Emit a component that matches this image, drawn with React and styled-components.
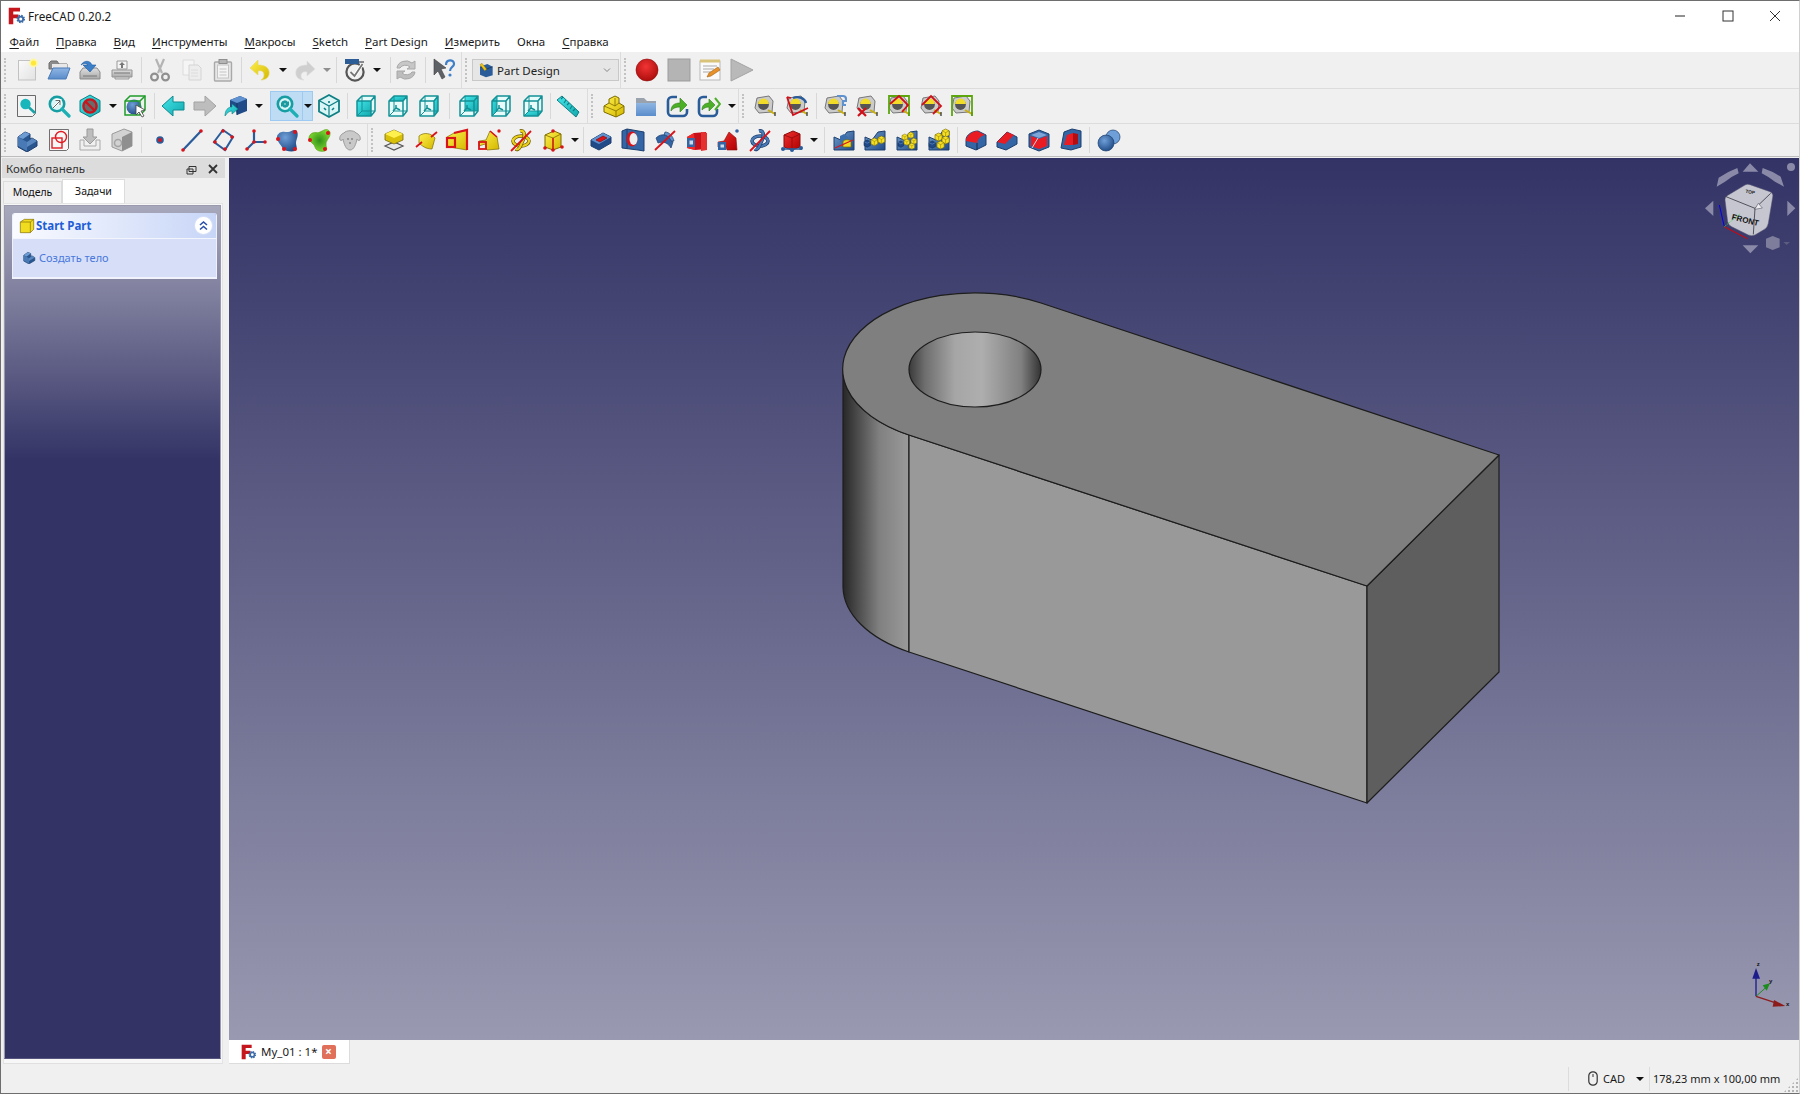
import React from 'react'
import styled, { createGlobalStyle } from 'styled-components'

const GlobalStyle = createGlobalStyle`
  html, body { margin: 0; padding: 0; background: #f0f0f0; }
  body { font-family: "Noto Sans", "Open Sans", sans-serif; font-size: 11.5px; color: #1a1a1a; }
`

/* ---------- icon helpers, everything is drawn on a 24x24 grid ---------- */

const Icon = styled.svg`
  width: ${p => p.$s || 24}px;
  height: ${p => p.$s || 24}px;
  display: block;
  flex: none;
`

const Svg = ({ s, children }) => <Icon $s={s} viewBox="0 0 24 24">{children}</Icon>

const Gradients = () => (
  <svg width="0" height="0" style={{ position: 'absolute' }}>
    <defs>
      <linearGradient id="blue" x1="0" y1="0" x2="1" y2="1"><stop offset="0" stopColor="#729fcf" /><stop offset="1" stopColor="#204a87" /></linearGradient>
      <linearGradient id="folder" x1="0" y1="0" x2="0" y2="1"><stop offset="0" stopColor="#8fb6e3" /><stop offset="1" stopColor="#5a8ccb" /></linearGradient>
      <linearGradient id="yellow" x1="0" y1="0" x2="1" y2="1"><stop offset="0" stopColor="#fff04d" /><stop offset="1" stopColor="#d4b800" /></linearGradient>
      <linearGradient id="teal" x1="0" y1="0" x2="1" y2="1"><stop offset="0" stopColor="#43e6ea" /><stop offset="1" stopColor="#12a8ad" /></linearGradient>
      <linearGradient id="red" x1="0" y1="0" x2="1" y2="1"><stop offset="0" stopColor="#f03030" /><stop offset="1" stopColor="#b00000" /></linearGradient>
      <linearGradient id="gray" x1="0" y1="0" x2="0" y2="1"><stop offset="0" stopColor="#dedede" /><stop offset="1" stopColor="#a9a9a9" /></linearGradient>
      <linearGradient id="paper" x1="0" y1="0" x2="1" y2="1"><stop offset="0" stopColor="#fbfbfb" /><stop offset="1" stopColor="#e2e2e2" /></linearGradient>
      <radialGradient id="ball" cx="0.4" cy="0.35" r="0.7"><stop offset="0" stopColor="#6f9fd8" /><stop offset="1" stopColor="#1f4a85" /></radialGradient>
      <radialGradient id="rec" cx="0.45" cy="0.35" r="0.7"><stop offset="0" stopColor="#f23434" /><stop offset="1" stopColor="#a80a0a" /></radialGradient>
      <radialGradient id="leaf" cx="0.5" cy="0.5" r="0.6"><stop offset="0" stopColor="#2f8f1a" /><stop offset="1" stopColor="#8ae234" /></radialGradient>
      <linearGradient id="cyl" x1="0" y1="0" x2="1" y2="0"><stop offset="0" stopColor="#272727" /><stop offset="0.55" stopColor="#808080" /><stop offset="1" stopColor="#9a9a9a" /></linearGradient>
      <linearGradient id="bore" x1="0" y1="0" x2="1" y2="0"><stop offset="0" stopColor="#3a3a3a" /><stop offset="0.12" stopColor="#6e6e6e" /><stop offset="0.35" stopColor="#a6a6a6" /><stop offset="0.55" stopColor="#aeaeae" /><stop offset="0.85" stopColor="#808080" /><stop offset="1" stopColor="#333" /></linearGradient>
    </defs>
  </svg>
)

const Dot = ({ x, y, r = 1.8 }) => <circle cx={x} cy={y} r={r} fill="#d8141a" />

const Mag = ({ children }) => (
  <>
    <circle cx="10" cy="10" r="7.2" fill="#d9f5f6" stroke="#179ea3" strokeWidth="2.6" />
    <path d="M15 15l7 7" stroke="#1cb0b5" strokeWidth="3.2" strokeLinecap="round" />
    {children}
  </>
)

const faces = {
  front: '3,7 17,7 17,22 3,22',
  top: '3,7 8,2 21,2 17,7',
  right: '17,7 21,2 21,17 17,22',
  rear: '8,2 21,2 21,17 8,17',
  left: '3,7 8,2 8,17 3,22',
  bottom: '3,22 8,17 21,17 17,22'
}

const ViewCube = ({ fill, mark }) => (
  <Svg>
    <polygon points="3,7 8,2 21,2 21,17 17,22 3,22" fill="#e8fbfb" />
    {fill.map(f => <polygon key={f} points={faces[f]} fill="url(#teal)" />)}
    <path d="M8 2v15h13M8 17l-5 5" fill="none" stroke="#129196" strokeWidth="1" />
    <path d="M3 7l5-5h13v15l-4 5H3zM3 7h14v15M17 7l4-5" fill="none" stroke="#129196" strokeWidth="1.500" strokeLinejoin="round" />
    {mark && <path d="M10 11v3l-3 3M10 14l4 2" fill="none" stroke="#129196" strokeWidth="1.500" />}
  </Svg>
)

const Tape = ({ children }) => (
  <Svg>
    <path d="M4 4l12-2 4 5-1 11-13 1-4-5z" fill="#cbcbcb" stroke="#777" />
    <circle cx="10.500" cy="10.500" r="5.400" fill="#555" />
    <path d="M5.100 10a5.400 5.400 0 0 1 10.800 0z" fill="#f2dc2a" />
    <path d="M15 16l7 4" stroke="#c9ae10" strokeWidth="2" />
    <path d="M22 18v4" stroke="#444" strokeWidth="1.400" />
    {children}
  </Svg>
)

const Block = ({ s, c1, c2, c3, stroke, children }) => (
  <Svg s={s}>
    <path d="M3 9l7-5 5 2v5l2-1 5 3v5l-10 6-9-5z" fill={c2} stroke={stroke} strokeWidth="1" strokeLinejoin="round" />
    <path d="M3 9l9 5v9l-9-5z" fill={c1} />
    <path d="M3 9l7-5 5 2-7 5z" fill={c3} />
    <path d="M12 14l3-2 2-2 5 3-10 6z" fill={c3} opacity=".7" />
    {children}
  </Svg>
)

const Box = ({ base, face, side, stroke = '#1d3f6e', children }) => (
  <Svg>
    <path d="M2 12l12-7 8 4v6l-12 7-8-4z" fill={base} stroke={stroke} strokeLinejoin="round" />
    <path d="M2 12l12-7 8 4-12 7z" fill={side} />
    <path d="M7 12l7-4 4 2-7 4z" fill={face} stroke="#7d0000" strokeWidth=".6" />
    {children}
  </Svg>
)

const Cube = ({ fill, edge, children }) => (
  <Svg>
    <path d="M4 7l9-4 7 3v13l-8 3-8-3z" fill={fill} stroke={edge} strokeLinejoin="round" />
    <path d="M4 7l8 3 8-4M12 10v12" fill="none" stroke={edge} strokeWidth=".8" />
    {children}
  </Svg>
)

const Ground = ({ children }) => (
  <Svg>
    <path d="M2 22V9l7 3 6-8 7-1v19z" fill="url(#blue)" stroke="#1d3f6e" strokeLinejoin="round" />
    {children}
  </Svg>
)

const YCube = ({ x, y, s = 1 }) => (
  <g transform={`translate(${x} ${y}) scale(${s})`}>
    <path d="M0 2l4-2 4 2v5l-4 2-4-2z" fill="#f5e024" stroke="#7d6b00" strokeWidth=".7" />
    <path d="M0 2l4 2 4-2M4 4v5" fill="none" stroke="#7d6b00" strokeWidth=".5" />
  </g>
)

const BCube = ({ x, y, s = 1 }) => (
  <g transform={`translate(${x} ${y}) scale(${s})`}>
    <path d="M0 2l4-2 4 2v5l-4 2-4-2z" fill="#204a87" stroke="#0f2b52" strokeWidth=".7" />
    <path d="M0 2l4 2 4-2" fill="none" stroke="#7ea6d8" strokeWidth=".6" />
  </g>
)

const Logo = ({ s = 20 }) => (
  <Svg s={s}>
    <path d="M1 1h15v5H7v4h7v5H7v8H1z" fill="#c4161c" />
    <circle cx="17" cy="16" r="4.4" fill="#3c6ca8" stroke="#3c6ca8" strokeWidth="2.6" strokeDasharray="2 1.45" />
    <circle cx="17" cy="16" r="2" fill="#fff" />
  </Svg>
)

const Cursor = () => <path d="M13 11l9 5-4 1 3 5-2 1-3-5-3 3z" fill="#fff" stroke="#444" strokeWidth=".8" />

const icons = {
  new: <Svg><rect x="3.5" y="2.5" width="17" height="19.5" fill="url(#paper)" stroke="#c2c2c2" /><circle cx="18.5" cy="5" r="4.4" fill="#fff7a0" /><circle cx="18.5" cy="5" r="2.6" fill="#ffe83a" /></Svg>,
  open: <Svg><path d="M2 5l2-2h6l2 3h8v5H2z" fill="#8b8b8b" stroke="#6f6f6f" /><path d="M5 6h15v4H5z" fill="#e8e8e8" /><path d="M6 10h17l-4 11H1z" fill="url(#folder)" stroke="#4a7bb8" strokeLinejoin="round" /></Svg>,
  save: <Svg><path d="M2 14l3-4h14l3 4v7H2z" fill="url(#gray)" stroke="#8a8a8a" strokeLinejoin="round" /><path d="M5 18h14" stroke="#777" /><path d="M3 7c3-5 9-5 11 0h4l-6 7-7-7h5c-2-2-4-2-7 0z" fill="#3b7fc8" stroke="#1f5a9e" strokeWidth=".6" /></Svg>,
  print: <Svg><path d="M7 3h10v8H7z" fill="#f4f4f4" stroke="#9a9a9a" /><path d="M12 4l3 3h-2v3h-2V7H9z" fill="#777" /><path d="M2 12h20v7H2z" fill="url(#gray)" stroke="#949494" /><path d="M4 15h16" stroke="#777" /><path d="M5 19h14v2H5z" fill="#ddd" stroke="#999" /></Svg>,
  cut: <Svg><path d="M8 1l6 14M16 1l-6 14" stroke="#b4b4b4" strokeWidth="2.2" /><circle cx="6.5" cy="19" r="3.4" fill="none" stroke="#8f8f8f" strokeWidth="2.2" /><circle cx="17.5" cy="19" r="3.4" fill="none" stroke="#8f8f8f" strokeWidth="2.2" /></Svg>,
  copy: <Svg><path d="M3 2h11v15H3z" fill="#f5f5f5" stroke="#dcdcdc" /><path d="M9 7h9l3 3v12H9z" fill="#ededed" stroke="#d4d4d4" /><path d="M11 12h7M11 15h7M11 18h7" stroke="#dcdcdc" /></Svg>,
  paste: <Svg><rect x="3.5" y="4" width="17" height="19" rx="1" fill="#e6e6e6" stroke="#a9a9a9" strokeWidth="1.4" /><rect x="6.5" y="7" width="11" height="13" fill="#f4f4f4" stroke="#c4c4c4" /><rect x="8" y="1.5" width="8" height="4" fill="#b5b5b5" stroke="#8f8f8f" /><path d="M8.500 11h7M8.500 14h7M8.500 17h7" stroke="#c4c4c4" /></Svg>,
  undo: <Svg><path d="M10 2L2 10l8 7v-4c4-1 6 1 6 4 0 2-1 4-3 5 6 0 9-4 8-9-1-4-5-6-11-6z" fill="url(#yellow)" stroke="#e4d66a" strokeWidth=".6" /></Svg>,
  redo: <Svg><path d="M14 3l8 8-8 7v-4c-4-1-6 1-6 4 0 2 1 3 3 4-6 0-9-4-8-9 1-4 5-6 11-6z" fill="#cfcfcf" stroke="#dedede" strokeWidth=".6" /></Svg>,
  check: <Svg><circle cx="12" cy="14" r="8.6" fill="#f0f0f0" stroke="#555" strokeWidth="2.2" /><path d="M7.500 14l4 4 8-12" fill="none" stroke="#fff" strokeWidth="3.6" /><path d="M7.500 14l4 4 8-12" fill="none" stroke="#777" strokeWidth="1.8" /><rect x="2" y="1" width="14" height="5" fill="#2b5c96" /><rect x="16" y="3" width="5" height="2" fill="#8a8a8a" /></Svg>,
  refresh: <Svg><path d="M3 10a9 8 0 0 1 15-5l3-2v8h-8l3-2a6 5 0 0 0-10 1z" fill="#c7c7c7" stroke="#a8a8a8" /><path d="M21 14a9 8 0 0 1-15 5l-3 2v-8h8l-3 2a6 5 0 0 0 10-1z" fill="#bdbdbd" stroke="#a8a8a8" /></Svg>,
  help: <Svg><path d="M2 1l12 9-5 1 4 8-3 2-4-8-4 4z" fill="#5e6166" stroke="#3d3d3d" strokeWidth=".6" /><path d="M14 7c0-6 8-6 8-1 0 3-4 3-4 7" fill="none" stroke="#3f7fc8" strokeWidth="2.2" /><circle cx="18" cy="17" r="1.6" fill="#3f7fc8" /></Svg>,
  record: <Svg><circle cx="12" cy="12" r="11" fill="url(#rec)" stroke="#8c0c0c" strokeWidth=".6" /></Svg>,
  stop: <Svg><rect x="1" y="1" width="22" height="22" fill="#b4b4b4" stroke="#9b9b9b" /></Svg>,
  notes: <Svg><rect x="2" y="3" width="20" height="19" fill="#fafafa" stroke="#b8b8b8" /><rect x="2" y="1.500" width="20" height="3" fill="#d9c27a" /><path d="M5 8h14M5 11h11M5 14h8" stroke="#a9a9a9" /><path d="M9 19l2-4 9-6 2 3-9 6z" fill="#e8902a" stroke="#a35f10" strokeWidth=".6" /></Svg>,
  play: <Svg><path d="M1 1l22 11L1 23z" fill="#b9b9b9" stroke="#a4a4a4" /></Svg>,

  fitall: <Svg><path d="M2.500 1.500h18v18l-3 3h-15z" fill="#f3f3f3" stroke="#6a6a6a" /><circle cx="10.500" cy="10" r="5.200" fill="#19b6bc" /><path d="M14 13.500l6 5.500" stroke="#17a3a8" strokeWidth="2.600" /></Svg>,
  fitsel: <Svg><Mag><path d="M6 14l7-7M8 6h5.500v5" fill="none" stroke="#fff" strokeWidth="2" /><path d="M6 14l7-7M8.500 6.500h4.500v4.500" fill="none" stroke="#444" strokeWidth=".8" /></Mag></Svg>,
  draw: <Svg><path d="M12 1l10 5.500v11L12 23 2 17.500v-11z" fill="url(#teal)" stroke="#0e7f84" /><circle cx="12" cy="12" r="6.600" fill="#6a6a6a" stroke="#c9161c" strokeWidth="2.400" /><path d="M7.500 7.500l9 9" stroke="#c9161c" strokeWidth="2.400" /></Svg>,
  bbox: <Svg><circle cx="11" cy="13" r="7.500" fill="url(#ball)" /><path d="M2 7l5-5h15v14l-5 5H2z" fill="none" stroke="#1f9c2a" strokeWidth="1.500" /><path d="M2 7h15v14M17 7l5-5" fill="none" stroke="#1f9c2a" strokeWidth="1.500" /><Cursor /></Svg>,
  back: <Svg><path d="M1 12L12 2v6h11v8H12v6z" fill="url(#teal)" stroke="#0e8a8f" strokeLinejoin="round" /></Svg>,
  fwd: <Svg><path d="M23 12L12 2v6H1v8h11v6z" fill="#bdbdbd" stroke="#a3a3a3" strokeLinejoin="round" /></Svg>,
  sync: <Svg><path d="M6 6l10-4 7 3v12l-10 4-1-5-6-3z" fill="#1f4c89" /><path d="M6 6l7 3 10-4-7-3z" fill="#5f92cf" /><path d="M13 9v12" stroke="#153761" /><path d="M1 22c0-6 3-9 7-9v-3l6 5-6 5v-3c-3 0-5 2-7 5z" fill="url(#teal)" stroke="#0e7f84" strokeWidth=".6" /></Svg>,
  zoomsync: <Svg><Mag><path d="M6 9a4 4 0 0 1 7-1l1-1v4h-4l1-1a2.500 2.500 0 0 0-4 0zM14 11a4 4 0 0 1-7 1l-1 1V9h4l-1 1a2.500 2.500 0 0 0 4 0z" fill="#1b9aa0" /></Mag></Svg>,
  iso: <Svg><path d="M12 1l10 5.500v11L12 23 2 17.500v-11z" fill="#d9f5f6" stroke="#0e7f84" strokeWidth="1.800" strokeLinejoin="round" /><path d="M2 6.500L12 12l10-5.500M12 12v11" fill="none" stroke="#0e7f84" strokeWidth="1.200" /><path d="M7 14l2 2M17 14l-2 2M12 7v2" stroke="#0e7f84" strokeWidth="1.600" /></Svg>,
  ruler: <Svg><path d="M1 6l5-4 17 16-3 5z" fill="url(#teal)" stroke="#0e7f84" strokeLinejoin="round" /><path d="M7 3l-2 2M10 6L8 9M13 9l-2 2M16 12l-2 3M19 15l-2 2" stroke="#0e7f84" strokeWidth="1.100" /></Svg>,

  part: <Svg><path d="M2 12l5-3V5l6-3 4 2v5l5 3v7l-8 4-12-5z" fill="url(#yellow)" stroke="#7d6b00" strokeLinejoin="round" /><path d="M2 12l12 5 8-5M14 17v6M7 9l6 3 4-3M13 4v8" fill="none" stroke="#7d6b00" strokeWidth=".8" /></Svg>,
  group: <Svg><path d="M2 4h8l3 3h9v15H2z" fill="#9aa3ad" /><path d="M2 9h20v13H2z" fill="url(#folder)" /></Svg>,
  link: <Svg><path d="M12 3H7a4 4 0 0 0-4 4v11a4 4 0 0 0 4 4h11a4 4 0 0 0 4-4v-3" fill="none" stroke="#2a5c9a" strokeWidth="2.600" /><path d="M6 17c0-6 4-8 9-8V4l7 7-7 7v-5c-4 0-7 1-9 4z" fill="#4caf28" stroke="#2e7d18" strokeWidth=".6" /></Svg>,
  linkmore: <Svg><path d="M10 3H6a4 4 0 0 0-4 4v11a4 4 0 0 0 4 4h10a4 4 0 0 0 4-4v-3" fill="none" stroke="#2a5c9a" strokeWidth="2.600" /><path d="M5 16c0-5 3-7 7-7V5l6 6-6 6v-4c-3 0-5 1-7 3z" fill="#4caf28" stroke="#2e7d18" strokeWidth=".6" /><path d="M18 4l5 6-5 6" fill="none" stroke="#4caf28" strokeWidth="2" /></Svg>,
  t1: <Tape />,
  t2: <Tape><path d="M2 3l6 18L23 14M2 3l4 1" fill="none" stroke="#d01018" strokeWidth="1.800" /><path d="M8 4a9 7 0 0 1 13 5" fill="none" stroke="#2a5c9a" strokeWidth="2.400" /></Tape>,
  t3: <Tape><path d="M14 2h6a3 3 0 0 1 3 3v2h-3v4h3" fill="none" stroke="#5f92cf" strokeWidth="2.200" /></Tape>,
  t4: <Tape><path d="M3 14l8 8M11 14l-8 8" stroke="#d01018" strokeWidth="2.200" /></Tape>,
  t5: <Tape><path d="M2 20V2h20v20" fill="none" stroke="#5da60d" strokeWidth="1.800" /><path d="M3 10l9-8 9 9-6 7" fill="none" stroke="#d01018" strokeWidth="1.800" /></Tape>,
  t6: <Tape><path d="M3 11l9-9 10 10-8 8" fill="none" stroke="#d01018" strokeWidth="1.800" /></Tape>,
  t7: <Tape><path d="M2 22V2h20v20" fill="none" stroke="#5da60d" strokeWidth="1.800" /></Tape>,

  body: <Block c1="#4a7ab5" c2="#2a568f" c3="#6f9dd3" stroke="#1d3f6e" />,
  sketch: <Svg><path d="M2.500 1.500h19v19l-2 2h-17z" fill="#f6f6f6" stroke="#707070" /><rect x="5" y="10" width="10" height="10" fill="none" stroke="#e01a20" strokeWidth="1.400" /><circle cx="14" cy="9" r="5.500" fill="none" stroke="#e01a20" strokeWidth="1.400" /></Svg>,
  import: <Svg><path d="M9 1h6v8h4l-7 7-7-7h4z" fill="#bdbdbd" stroke="#9a9a9a" /><path d="M2 12v10h20V12h-4v6H6v-6z" fill="#efefef" stroke="#a9a9a9" /></Svg>,
  clone: <Svg><path d="M2 6l12-5 8 3v14l-10 5-10-4z" fill="#d2d2d2" stroke="#9a9a9a" /><path d="M12 9l10-5v14l-10 5z" fill="#8f8f8f" /><circle cx="8" cy="15" r="3.500" fill="none" stroke="#a4a4a4" strokeWidth="1.500" /></Svg>,
  point: <Svg><circle cx="12" cy="12" r="3.800" fill="#2a5c9a" /><circle cx="12" cy="12" r="1.900" fill="#d8141a" /></Svg>,
  line: <Svg><path d="M3 22L21 3" stroke="#2a5c9a" strokeWidth="2.200" /><Dot x={3} y={22} /><Dot x={21} y={3} /></Svg>,
  plane: <Svg><path d="M12 2l10 7-8 13-11-8z" fill="none" stroke="#2a5c9a" strokeWidth="2" /><Dot x={12} y={3} /><Dot x={21} y={9} /><Dot x={14} y={21} /><Dot x={4} y={14} /></Svg>,
  lcs: <Svg><path d="M11 14V3M11 14l-7 7M11 14h11" stroke="#2a5c9a" strokeWidth="2.200" /><Dot x={11} y={3} /><Dot x={11} y={14} /><Dot x={22} y={14} /><Dot x={4} y={21} /></Svg>,
  binder: <Svg><path d="M2 8C5 2 10 4 13 4C16 4 19 0 22 3C24 8 21 11 21 15C21 18 23 20 20 23C16 24 10 23 8 21C6 16 2 15 2 8Z" fill="url(#ball)" /><Dot x={3} y={11} r={2} /><Dot x={20} y={4} r={2} /><Dot x={20} y={21} r={2} /><Dot x={9} y={21} r={2} /></Svg>,
  subshape: <Svg><path d="M2 9C5 2 10 6 13 4C16 3 20 -1 23 4C24 9 19 12 19 16C19 20 21 21 18 23C14 24 9 23 8 19C7 15 2 15 2 9Z" fill="url(#leaf)" stroke="#4e9a06" strokeWidth=".6" /><Dot x={3} y={12} r={2} /><Dot x={21} y={5} r={2} /><Dot x={18} y={21} r={2} /></Svg>,
  sheep: <Svg><path d="M6 5c2-3 10-3 12 0 3 1 5 4 4 7-1 1-3 0-3-1-1 5-3 11-7 11S6 16 5 11c0 1-2 2-3 1-1-3 1-6 4-7z" fill="#c9c9c9" stroke="#9c9c9c" /><path d="M9 11h2M13 11h2M11 15h2" stroke="#666" strokeWidth="1.200" /></Svg>,

  pad: <Svg><path d="M3 18l9 4 9-4-9-4z" fill="#e9e9e9" stroke="#555" strokeWidth="1.200" /><path d="M3 6l9-4 9 4v6l-9 4-9-4z" fill="#d9c10a" stroke="#6a5a00" strokeWidth=".7" /><path d="M3 6l9 4 9-4-9-4z" fill="#fff04d" /></Svg>,
  revolve: <Svg><path d="M5 8c5-4 12-3 16 2l-3 11c-6 0-10-3-13-6z" fill="url(#yellow)" stroke="#7d6b00" strokeWidth=".7" /><path d="M2 19l6-5M17 9l6-5" stroke="#d8141a" strokeWidth="1.800" /></Svg>,
  loft: <Svg><path d="M9 5l13-3v20l-12-2-8-2V9z" fill="url(#yellow)" stroke="#7d6b00" strokeWidth=".7" /><path d="M9 5l13-3v20" fill="none" stroke="#d8141a" strokeWidth="2.200" /><rect x="2" y="10" width="8" height="9" fill="none" stroke="#d8141a" strokeWidth="2.200" /></Svg>,
  pipe: <Svg><path d="M2 13l7-1 4-9 7 6 2 12-12 1-2-6-6 2z" fill="url(#yellow)" stroke="#7d6b00" strokeWidth=".7" /><path d="M13 3l7 6" stroke="#d8141a" strokeWidth="1.600" /><rect x="2" y="14" width="7" height="7" fill="none" stroke="#d8141a" strokeWidth="1.800" /><circle cx="22" cy="3" r="1.700" fill="#d8141a" /></Svg>,
  helix: <Svg><ellipse cx="12" cy="13" rx="8" ry="5" fill="none" stroke="#6a5a00" strokeWidth="3.600" /><ellipse cx="12" cy="13" rx="8" ry="5" fill="none" stroke="#ecd11c" strokeWidth="2.200" /><path d="M11 3c4-1 5 3 4 7l-4 9c-1 2-3 3-4 2" fill="none" stroke="#6a5a00" strokeWidth="3.600" /><path d="M11 3c4-1 5 3 4 7l-4 9c-1 2-3 3-4 2" fill="none" stroke="#ecd11c" strokeWidth="2.200" /><path d="M2 23L22 3" stroke="#d8141a" strokeWidth="1.800" /></Svg>,
  prim: <Cube fill="url(#yellow)" edge="#7d6b00"><path d="M12 10v12" stroke="#d8141a" strokeWidth="1.400" /><Dot x={12} y={3} /><Dot x={4} y={20} /><Dot x={12} y={22} /><Dot x={21} y={19} /></Cube>,
  pocket: <Box base="#204a87" side="#5f92cf" face="#d8141a" />,
  hole: <Svg><path d="M1 3l5-2 17 3v19l-6-1-16-2z" fill="#3465a4" stroke="#1d3f6e" /><path d="M6 1v20" stroke="#1d3f6e" /><ellipse cx="11" cy="11" rx="5.400" ry="7.500" fill="#d8141a" /><ellipse cx="12.500" cy="11" rx="4" ry="6" fill="#eee" /></Svg>,
  groove: <Svg><path d="M3 10c6-6 13-3 17 4l-2 6c-3-5-7-7-13-5z" fill="#3465a4" stroke="#1d3f6e" strokeWidth=".7" /><path d="M12 4c4 0 8 4 9 9l-3 0c-1-3-4-6-7-6z" fill="#5f92cf" stroke="#1d3f6e" strokeWidth=".7" /><path d="M2 22L22 3" stroke="#d8141a" strokeWidth="1.800" /></Svg>,
  subloft: <Svg><path d="M9 5l12-1 1 17-12 1-8-2V9z" fill="#c8101a" /><path d="M9 5l-7 4v11l8 2" fill="#ef2929" /><rect x="2" y="10" width="8" height="9" fill="#3465a4" /><rect x="4.500" y="12.500" width="3.500" height="4" fill="#cdd9ea" /><path d="M16 4l6 1v17l-6 1z" fill="#e53030" /></Svg>,
  subpipe: <Svg><path d="M2 14l6-1 5-9 7 6 1 12H11l-2-6-7 3z" fill="url(#red)" stroke="#8c0c0c" strokeWidth=".6" /><rect x="2" y="14" width="8" height="8" fill="#3465a4" /><rect x="4.500" y="16.500" width="3.500" height="3" fill="#cdd9ea" /><circle cx="21" cy="3" r="1.800" fill="#3465a4" /></Svg>,
  subhelix: <Svg><ellipse cx="12" cy="13" rx="8" ry="5" fill="none" stroke="#1d3f6e" strokeWidth="3.600" /><ellipse cx="12" cy="13" rx="8" ry="5" fill="none" stroke="#4a7ab5" strokeWidth="2.200" /><path d="M11 3c4-1 5 3 4 7l-4 9c-1 2-3 3-4 2" fill="none" stroke="#1d3f6e" strokeWidth="3.600" /><path d="M11 3c4-1 5 3 4 7l-4 9c-1 2-3 3-4 2" fill="none" stroke="#4a7ab5" strokeWidth="2.200" /><path d="M2 23L22 3" stroke="#d8141a" strokeWidth="1.800" /></Svg>,
  subprim: <Svg><path d="M4 7l9-4 7 3v13l-8 3-8-3z" fill="url(#red)" stroke="#8c0c0c" strokeLinejoin="round" /><path d="M4 7l8 3 8-4M12 10v12" fill="none" stroke="#8c0c0c" strokeWidth=".8" /><path d="M2 21h20" stroke="#2a5c9a" strokeWidth="1.500" /><circle cx="3" cy="21" r="2" fill="#2a5c9a" /><circle cx="12" cy="22" r="2" fill="#2a5c9a" /><circle cx="21" cy="20" r="2" fill="#2a5c9a" /></Svg>,

  mirror: <Ground><path d="M8 8l4-2 4 3v3l-8 2z" fill="#3b6eaa" /><path d="M11 14c0-3 8-3 8 0v5H11z" fill="#f0d822" stroke="#7d6b00" strokeWidth=".7" /><path d="M3 20l18-8" stroke="#d8141a" strokeWidth="1.200" /></Ground>,
  linear: <Ground><BCube x={1} y={12} s={.8} /><YCube x={8} y={10} s={.85} /><YCube x={15} y={8} s={.85} /></Ground>,
  polar: <Ground><BCube x={3} y={13} s={.7} /><YCube x={7} y={6} s={.7} /><YCube x={13} y={4} s={.7} /><YCube x={16} y={10} s={.7} /><YCube x={9} y={11} s={.7} /><YCube x={14} y={15} s={.7} /></Ground>,
  multi: <Ground><BCube x={2} y={13} s={.8} /><YCube x={8} y={5} s={.9} /><YCube x={15} y={1} s={.9} /><YCube x={15} y={8} s={.9} /><YCube x={10} y={13} s={.9} /></Ground>,

  fillet: <Svg><path d="M2 12c0-5 6-9 12-9l8 4v10l-10 5-10-4z" fill="#3465a4" stroke="#1d3f6e" /><path d="M2 13c0-5 5-9 11-10l8 4c-5 1-7 4-8 8z" fill="#e81c22" /><path d="M13 15v7" stroke="#0f2b52" /></Svg>,
  chamfer: <Svg><path d="M2 14L12 4l10 5v7l-11 6-9-3z" fill="#3465a4" stroke="#1d3f6e" /><path d="M2 14L12 4l7 3-9 9z" fill="#e81c22" /></Svg>,
  draft: <Svg><path d="M12 2l10 4v13l-10 4-10-4V6z" fill="#3465a4" stroke="#1d3f6e" strokeLinejoin="round" /><path d="M4 8l8 3v10l-8-3zM20 8l-8 3v10l8-3z" fill="#e81c22" /><path d="M4 7l8-3 8 3-8 3z" fill="#7ea6d8" /><path d="M5 20l6-10" stroke="#cdd9ea" /></Svg>,
  thick: <Svg><path d="M5 4l8-3 9 2v16l-10 3-10-2z" fill="#3465a4" stroke="#1d3f6e" strokeLinejoin="round" /><path d="M8 7l6-2v12H5z" fill="#e81c22" /><path d="M14 5l5 1v10l-5 1z" fill="#b30d12" /></Svg>,
  boolean: <Svg><circle cx="16" cy="9" r="7" fill="#6f9fd8" stroke="#1d3f6e" strokeWidth=".7" /><circle cx="9" cy="15" r="8" fill="url(#ball)" stroke="#1d3f6e" strokeWidth=".7" /></Svg>
}

/* ---------- toolbars ---------- */

const row1 = [
  { width: 461, items: ['new', 'open', 'save', 'print', 's6', 'cut', 'copy', 'paste', 's5', 'undo', 'a', 'redo', 'g', 's5', 'check', 'a', 'd6', 's1', 'refresh', 's6', 'help'] },
  { width: 159, combo: true },
  { items: ['record', 'stop', 'notes', 'play'] }
]

const row2 = [
  { width: 587, items: ['fitall', 'fitsel', 'draw', 'a', 'bbox', 's6', 'back', 'fwd', 'sync', 'a', 'd5', 'active', 'iso', 's5', 'v:front', 'v:top', 'v:right', 's8', 'v:rear', 'v:left', 'v:bottom', 's4', 'ruler'] },
  { width: 151, items: ['part', 'group', 'link', 'linkmore', 'a'] },
  { items: ['t1', 't2', 's7', 't3', 't4', 't5', 't6', 't7'] }
]

const row3 = [
  { width: 367, items: ['body', 'sketch', 'import', 'clone', 's6', 'point', 'line', 'plane', 'lcs', 'binder', 'subshape', 'sheep'] },
  { items: ['pad', 'revolve', 'loft', 'pipe', 'helix', 'prim', 'a', 's4', 'pocket', 'hole', 'groove', 'subloft', 'subpipe', 'subhelix', 'subprim', 'a', 's7', 'mirror', 'linear', 'polar', 'multi', 's5', 'fillet', 'chamfer', 'draft', 'thick', 's6', 'boolean'] }
]

const ToolRow = styled.div`
  display: flex;
  height: ${p => p.$h}px;
  background: #f0f0f0;
  border-bottom: 1px solid ${p => p.$line};
  box-sizing: border-box;
`

const Group = styled.div`
  display: flex;
  align-items: center;
  flex: ${p => (p.$w ? 'none' : 1)};
  width: ${p => (p.$w ? `${p.$w}px` : 'auto')};
  box-sizing: border-box;
  border-right: 1px solid #dcdcdc;
  &:last-child { border-right: 0; }
`

const Grip = styled.span`
  width: 0;
  height: 24px;
  margin: 0 5px 0 3px;
  border-left: 2px dotted #c2c2c2;
  flex: none;
`

const ToolButton = styled.div`
  width: 31.75px;
  height: 30px;
  display: flex;
  align-items: center;
  justify-content: center;
  flex: none;
`

const Caret = styled.div`
  width: ${p => p.$w || 13}px;
  height: 30px;
  display: flex;
  align-items: center;
  justify-content: center;
  flex: none;
  &::after {
    content: '';
    border-left: 4px solid transparent;
    border-right: 4px solid transparent;
    border-top: 4px solid ${p => (p.$off ? '#8f8f8f' : '#111')};
  }
`

const Sep = styled.div`
  width: ${p => p.$w}px;
  height: 26px;
  flex: none;
  display: flex;
  justify-content: center;
  &::after {
    content: '';
    width: 1px;
    background: #d8d8d8;
  }
`

const Gap = styled.div`
  width: ${p => p.$w}px;
  flex: none;
`

const ActiveSplit = styled.div`
  display: flex;
  align-items: stretch;
  height: 30px;
  width: 43px;
  box-sizing: border-box;
  flex: none;
  background: #bfdcf5;
  border: 1px solid #9ccaf0;
`

const ActiveMain = styled.div`
  width: 31px;
  flex: none;
  display: flex;
  align-items: center;
  justify-content: center;
  border-right: 1px solid #9ccaf0;
`

const Combo = styled.div`
  width: 147px;
  height: 22px;
  box-sizing: border-box;
  display: flex;
  align-items: center;
  padding: 0 5px;
  gap: 3px;
  background: #e6e6e6;
  border: 1px solid #c8c8c8;
  color: #222;
  svg:last-child { margin-left: auto; }
`

const renderItem = (it, i) => {
  if (it === 'a') return <Caret key={i} />
  if (it === 'g') return <Caret key={i} $off />
  if (it === 'active') {
    return (
      <ActiveSplit key={i}>
        <ActiveMain>{icons.zoomsync}</ActiveMain>
        <Caret $w={10} style={{ height: 'auto' }} />
      </ActiveSplit>
    )
  }
  if (it.startsWith('v:')) {
    const f = it.slice(2)
    return <ToolButton key={i}><ViewCube fill={[f]} mark={f !== 'front'} /></ToolButton>
  }
  if (/^s\d$/.test(it)) return <Sep key={i} $w={+it[1]} />
  if (/^d\d$/.test(it)) return <Gap key={i} $w={+it[1]} />
  return <ToolButton key={i}>{icons[it]}</ToolButton>
}

const Toolbar = ({ groups, h, line }) => (
  <ToolRow $h={h} $line={line}>
    {groups.map((g, n) => (
      <Group key={n} $w={g.width}>
        <Grip />
        {g.combo && (
          <Combo>
            <Svg s={16}>
              <path d="M3 7l11-4 8 4v13l-10 3-9-4z" fill="#2a5c9a" />
              <path d="M3 7l9 4 10-4" fill="none" stroke="#123" strokeWidth=".8" />
              <path d="M6 2l7 9-3 2-7-9z" fill="#f2c40f" stroke="#7d6b00" strokeWidth=".6" />
            </Svg>
            Part Design
            <Svg s={12}><path d="M6 9l6 6 6-6" fill="none" stroke="#666" strokeWidth="1.500" /></Svg>
          </Combo>
        )}
        {g.items && g.items.map(renderItem)}
      </Group>
    ))}
  </ToolRow>
)

/* ---------- window chrome ---------- */

const Window = styled.div`
  width: 1800px;
  height: 1094px;
  box-sizing: border-box;
  display: flex;
  flex-direction: column;
  overflow: hidden;
  background: #f0f0f0;
  border: 1px solid #6e6e6e;
  border-right-color: #d0d0d0;
  position: relative;
`

const TitleBar = styled.div`
  height: 31px;
  flex: none;
  display: flex;
  align-items: center;
  background: #fff;
  padding: 0 0 2px 7px;
  box-sizing: border-box;
  gap: 2px;
  span { font-size: 11.7px; }
`

const WinButtons = styled.div`
  margin-left: auto;
  display: flex;
  height: 100%;
  align-items: center;
`

const WinButton = styled.div`
  width: 47.5px;
  display: flex;
  justify-content: center;
`

const MenuBar = styled.div`
  height: 20px;
  flex: none;
  display: flex;
  align-items: center;
  padding-bottom: 1px;
  box-sizing: border-box;
  background: #fff;
`

const MenuItem = styled.div`
  padding: 0 8.45px;
  white-space: nowrap;
  u { text-underline-offset: 2px; }
`

const Body = styled.div`
  flex: 1;
  min-height: 0;
  display: flex;
`

/* ---------- dock ---------- */

const Dock = styled.div`
  width: 228px;
  flex: none;
  display: flex;
  flex-direction: column;
  padding: 1px 4px 0 1px;
  box-sizing: border-box;
`

const DockTitle = styled.div`
  height: 20px;
  flex: none;
  background: #dcdcdc;
  display: flex;
  align-items: center;
  padding: 1px 6px 0 4px;
  box-sizing: border-box;
  color: #333;
  svg:first-of-type { margin-left: auto; margin-right: 9px; }
`

const Tabs = styled.div`
  display: flex;
  height: 24px;
  flex: none;
  align-items: flex-end;
  padding-left: 1px;
  margin-top: 1px;
`

const Tab = styled.div`
  height: ${p => (p.$active ? 24 : 22)}px;
  box-sizing: border-box;
  width: ${p => p.$w}px;
  display: flex;
  align-items: center;
  justify-content: center;
  padding-bottom: 1px;
  font-size: 10.5px;
  background: ${p => (p.$active ? '#fff' : '#f0f0f0')};
  border: 1px solid #dcdcdc;
  border-bottom: 0;
  color: #111;
`

const Pane = styled.div`
  flex: 1;
  min-height: 0;
  margin: 0 2px 0 1px;
  padding: 1px 1px 4px 0;
  background: #f7f7f7;
  border: 1px solid #e4e4e4;
  border-bottom-color: #e0e0e0;
  display: flex;
`

const TaskArea = styled.div`
  flex: 1;
  padding: 7px 3px 0 7px;
  background: linear-gradient(#a8a8bc 0, #333366 254px, #333366 100%);
  border: 1px solid #9a9aae;
  border-bottom-color: #555580;
`

const TaskBox = styled.div`
  border-radius: 3px 3px 0 0;
  overflow: hidden;
  border-bottom: 2px solid #f0f3fc;
  border-left: 1px solid #eef1fb;
  border-right: 1px solid #eef1fb;
`

const TaskHead = styled.div`
  height: 25px;
  display: flex;
  align-items: center;
  padding: 0 4px 0 6px;
  gap: 1px;
  background: linear-gradient(90deg, #fafbff, #c7d5f7);
  border-bottom: 1px solid #f3f5fd;
  color: #215dd6;
  font-weight: 700;
`

const Collapse = styled.div`
  margin-left: auto;
  width: 17px;
  height: 17px;
  border-radius: 50%;
  background: #fff;
  box-shadow: 0 0 0 1px #d7e0f8;
  display: flex;
  align-items: center;
  justify-content: center;
`

const TaskBody = styled.div`
  height: 38px;
  background: #d6dff7;
  display: flex;
  align-items: center;
  padding: 0 0 2px 9px;
  box-sizing: border-box;
  gap: 3px;
  font-size: 11px;
  color: #4a78dc;
`

/* ---------- 3d view ---------- */

const Main = styled.div`
  flex: 1;
  min-width: 0;
  display: flex;
  flex-direction: column;
`

const Viewport = styled.div`
  flex: 1;
  min-height: 0;
  position: relative;
  margin-top: 1px;
  overflow: hidden;
  background: linear-gradient(#333366, #9999b1);
`

const Overlay = styled.svg`
  position: absolute;
  display: block;
  ${p => p.$pos}
`

const DocTabs = styled.div`
  height: 24px;
  flex: none;
  display: flex;
  background: #f0f0f0;
`

const DocTab = styled.div`
  width: 121px;
  box-sizing: border-box;
  display: flex;
  align-items: center;
  padding-left: 12px;
  gap: 4px;
  background: #fff;
  border-right: 1px solid #dcdcdc;
  border-bottom: 1px solid #dcdcdc;
`

const TabClose = styled.div`
  width: 14px;
  height: 14px;
  border-radius: 2px;
  background: #e0705a;
  color: #fff;
  font-size: 12px;
  line-height: 14px;
  text-align: center;
  font-weight: 700;
`

const Model = () => (
  <Overlay $pos="left: 601px; top: 127px;" width="680" height="530" viewBox="830 285 680 530">
    <path d="M843 369V587A132 76 0 0 0 909 652V435A132 76 0 0 1 843 369Z" fill="url(#cyl)" stroke="#1d1d1d" strokeWidth="1.200" />
    <path d="M909 435L1367 586V803L909 652Z" fill="#999" stroke="#1d1d1d" strokeWidth="1.200" strokeLinejoin="round" />
    <path d="M1367 586L1499 455V672L1367 803Z" fill="#5e5e5e" stroke="#1d1d1d" strokeWidth="1.200" strokeLinejoin="round" />
    <path d="M909 435A132 76 0 1 1 1041 303L1499 455L1367 586Z" fill="#7f7f7f" stroke="#1d1d1d" strokeWidth="1.200" strokeLinejoin="round" />
    <ellipse cx="975" cy="369.500" rx="66" ry="37.500" fill="url(#bore)" stroke="#1d1d1d" strokeWidth="1.200" />
  </Overlay>
)

const navColor = '#8a8aa8'

const NaviCube = () => (
  <Overlay $pos="right: -1px; top: 0;" width="140" height="112" viewBox="0 474 420 336">
    <polygon points="248,515 270,490 295,515" fill={navColor} />
    <polygon points="248,736 295,736 271,760" fill={navColor} />
    <polygon points="160,602 160,648 135,625" fill={navColor} />
    <polygon points="382,602 382,648 406,625" fill={navColor} />
    <path d="M170 560L176 533Q205 514 232 504L236 520Q214 530 195 545Z" fill={navColor} />
    <path d="M372 560L362 530Q338 514 308 504L305 520Q325 530 345 545Z" fill={navColor} />
    <circle cx="393" cy="501" r="12" fill={navColor} />
    <path d="M318 716l20-8 21 8v26l-21 8-20-8z" fill="#7e7e9c" />
    <path d="M370 726h20l-10 9z" fill="#5c5c80" />
    <path d="M195 600Q194 590 205 585L255 555Q262 551 270 554L330 575Q341 580 338 592L325 670Q322 685 310 690L285 705Q275 709 265 705L215 680Q205 675 203 665Z" fill="#c6c6d0" stroke="#55556f" strokeWidth="1.500" />
    <path d="M198 590L285 625L332 580M285 625L280 703" fill="none" stroke="#33333f" strokeWidth="2.400" />
    <polygon points="284,628 307,624 295,610" fill="#eeeef2" stroke="#3d3d4f" strokeWidth="1.500" />
    <text x="214" y="658" fontSize="24" fontWeight="700" fill="#111" fontFamily="Liberation Sans, sans-serif" transform="rotate(14 214 658)">FRONT</text>
    <text x="256" y="578" fontSize="14" fontWeight="700" fill="#222" fontFamily="Liberation Sans, sans-serif" transform="rotate(10 256 578)">TOP</text>
    <path d="M193 680L178 615" stroke="#0000f0" strokeWidth="3" />
    <path d="M193 680L262 716" stroke="#e00000" strokeWidth="3" />
    <path d="M193 680L242 640" stroke="#40e040" strokeWidth="2" strokeDasharray="6 3" />
  </Overlay>
)

const Triad = () => (
  <Overlay $pos="right: -1px; bottom: 22px;" width="80" height="60" viewBox="540 50 240 180">
    <path d="M648 165V100" stroke="#1c1c8c" strokeWidth="4" />
    <path d="M637 112L648 80L660 112Z" fill="#1c1c8c" />
    <path d="M648 165L676 140" stroke="#1c8c1c" strokeWidth="3" />
    <path d="M668 132L690 126L680 148Z" fill="#1c8c1c" />
    <path d="M648 165L712 186" stroke="#8c1c1c" strokeWidth="4" />
    <path d="M702 176L736 194L698 196Z" fill="#8c1c1c" />
    <text x="650" y="74" fontSize="18" fontWeight="700" fill="#111" fontFamily="Liberation Sans, sans-serif">z</text>
    <text x="687" y="124" fontSize="18" fontWeight="700" fill="#111" fontFamily="Liberation Sans, sans-serif">y</text>
    <text x="738" y="193" fontSize="18" fontWeight="700" fill="#111" fontFamily="Liberation Sans, sans-serif">x</text>
  </Overlay>
)

/* ---------- status bar ---------- */

const StatusBar = styled.div`
  height: 29px;
  flex: none;
  display: flex;
  align-items: center;
  justify-content: flex-end;
  position: relative;
  background: #f0f0f0;
`

const StatusCell = styled.div`
  height: 24px;
  box-sizing: border-box;
  display: flex;
  align-items: center;
  padding: ${p => p.$pad};
  gap: 5px;
  width: ${p => p.$w}px;
  white-space: nowrap;
  font-size: 11px;
  border-left: 1px solid #dcdcdc;
  svg { flex: none; }
  &:last-of-type { border-right: 1px solid #dcdcdc; }
`

const SizeGrip = styled.div`
  width: 16px;
  height: 16px;
  align-self: flex-end;
  background-image: radial-gradient(circle, #b4b4b4 1px, transparent 1.2px);
  background-size: 4px 4px;
  clip-path: polygon(100% 0, 100% 100%, 0 100%);
`

const MENU = [
  ['Ф', 'айл'], ['П', 'равка'], ['В', 'ид'], ['И', 'нструменты'], ['М', 'акросы'],
  ['S', 'ketch'], ['P', 'art Design'], ['И', 'змерить'], ['', 'Окна'], ['С', 'правка']
]

export default function App() {
  return (
    <>
      <GlobalStyle />
      <Gradients />
      <Window>
        <TitleBar>
          <Logo s={18} />
          <span>FreeCAD 0.20.2</span>
          <WinButtons>
            <WinButton><svg width="12" height="12"><path d="M1 6h10" stroke="#222" /></svg></WinButton>
            <WinButton><svg width="12" height="12"><rect x="1" y="1" width="10" height="10" fill="none" stroke="#333" /></svg></WinButton>
            <WinButton><svg width="12" height="12"><path d="M1 1l10 10M11 1L1 11" stroke="#333" /></svg></WinButton>
          </WinButtons>
        </TitleBar>
        <MenuBar>
          {MENU.map(([u, rest], i) => (
            <MenuItem key={i}>{u && <u>{u}</u>}{rest}</MenuItem>
          ))}
        </MenuBar>
        <Toolbar groups={row1} h={37} line="#dcdcdc" />
        <Toolbar groups={row2} h={35} line="#dcdcdc" />
        <Toolbar groups={row3} h={33} line="#bdbdbd" />
        <Body>
          <Dock>
            <DockTitle>
              Комбо панель
              <svg width="12" height="12"><path d="M3 3.500h7v5H3z M1 6h6v5H1z" fill="#dcdcdc" stroke="#333" /></svg>
              <svg width="12" height="12"><path d="M2 2l8 8M10 2l-8 8" stroke="#333" strokeWidth="1.800" /></svg>
            </DockTitle>
            <Tabs>
              <Tab $w={59}>Модель</Tab>
              <Tab $w={63} $active>Задачи</Tab>
            </Tabs>
            <Pane>
              <TaskArea>
                <TaskBox>
                  <TaskHead>
                    <Svg s={16}>
                      <path d="M2 6l6-4h14v15l-5 5H2z" fill="#f2dc20" stroke="#7d6b00" />
                      <path d="M2 6h15v16M17 6l5-4" fill="none" stroke="#7d6b00" />
                    </Svg>
                    Start Part
                    <Collapse>
                      <svg width="11" height="11"><path d="M2 5l3.500-3L9 5M2 9.500l3.500-3 3.500 3" fill="none" stroke="#2a4fa8" strokeWidth="1.600" /></svg>
                    </Collapse>
                  </TaskHead>
                  <TaskBody>
                    <Block s={14} c1="#4a7ab5" c2="#2a568f" c3="#6f9dd3" stroke="#1d3f6e" />
                    Создать тело
                  </TaskBody>
                </TaskBox>
              </TaskArea>
            </Pane>
          </Dock>
          <Main>
            <Viewport>
              <Model />
              <NaviCube />
              <Triad />
            </Viewport>
            <DocTabs>
              <DocTab>
                <Logo s={16} />
                My_01 : 1*
                <TabClose>×</TabClose>
              </DocTab>
            </DocTabs>
          </Main>
        </Body>
        <StatusBar>
          <StatusCell $w={81} $pad="0 0 0 19px">
            <svg width="10" height="15"><rect x=".8" y=".8" width="8.400" height="13.400" rx="4" fill="none" stroke="#333" strokeWidth="1.200" /><path d="M5 3v3" stroke="#333" /></svg>
            CAD
            <Caret $w={20} />
          </StatusCell>
          <StatusCell $w={134} $pad="0 0 0 3px">178,23 mm x 100,00 mm</StatusCell>
          <SizeGrip />
        </StatusBar>
      </Window>
    </>
  )
}
